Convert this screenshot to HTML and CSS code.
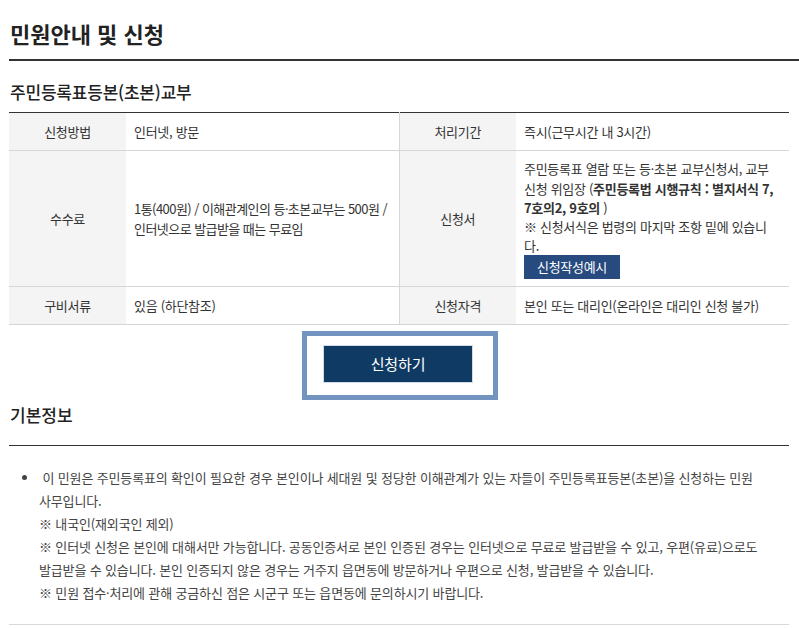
FILE: index.html
```html
<!DOCTYPE html>
<html lang="ko">
<head>
<meta charset="utf-8">
<title>민원안내 및 신청</title>
<link rel="stylesheet" href="styles.css">
</head>
<body>
<div class="page">
  <h1 class="page-title">민원안내 및 신청</h1>
  <h2 class="sub-title">주민등록표등본(초본)교부</h2>
  <table class="info-table">
    <colgroup>
      <col class="c-label"><col class="c-value"><col class="c-label"><col class="c-value">
    </colgroup>
    <tr>
      <th>신청방법</th>
      <td>인터넷, 방문</td>
      <th class="th-split">처리기간</th>
      <td>즉시(근무시간 내 3시간)</td>
    </tr>
    <tr>
      <th>수수료</th>
      <td class="td-fee">1통(400원) / 이해관계인의 등<span class="dot">·</span>초본교부는 500원 / 인터넷으로 발급받을 때는 무료임</td>
      <th class="th-split">신청서</th>
      <td class="td-form">주민등록표 열람 또는 등<span class="dot">·</span>초본 교부신청서, 교부 신청 위임장 (<b>주민등록법 시행규칙 : 별지서식 7, 7호의2, 9호의</b> )<br>※ 신청서식은 법령의 마지막 조항 밑에 있습니다.<br><a class="btn-sample" href="#">신청작성예시</a></td>
    </tr>
    <tr>
      <th>구비서류</th>
      <td>있음 (하단참조)</td>
      <th class="th-split">신청자격</th>
      <td>본인 또는 대리인(온라인은 대리인 신청 불가)</td>
    </tr>
  </table>
  <div class="apply-wrap">
    <div class="apply-frame"><a class="btn-apply" href="#">신청하기</a></div>
  </div>
  <h3 class="section-title">기본정보</h3>
  <ul class="basic-list">
    <li>&nbsp;이 민원은 주민등록표의 확인이 필요한 경우 본인이나 세대원 및 정당한 이해관계가 있는 자들이 주민등록표등본(초본)을 신청하는 민원 사무입니다.<br>※ 내국인(재외국인 제외)<br>※ 인터넷 신청은 본인에 대해서만 가능합니다. 공동인증서로 본인 인증된 경우는 인터넷으로 무료로 발급받을 수 있고, 우편(유료)으로도 발급받을 수 있습니다. 본인 인증되지 않은 경우는 거주지 읍면동에 방문하거나 우편으로 신청, 발급받을 수 있습니다.<br>※ 민원 접수<span class="dot">·</span>처리에 관해 궁금하신 점은 시군구 또는 읍면동에 문의하시기 바랍니다.</li>
  </ul>
</div>
</body>
</html>
```

FILE: styles.css
```css
html, body {
  margin: 0;
  padding: 0;
  background: #fff;
}
body {
  font-family: "Noto Sans CJK KR", "Noto Sans", sans-serif;
  color: #333;
  font-size: 13px;
  letter-spacing: -0.15px;
}
.dot {
  font-family: "Noto Sans", "Noto Sans CJK KR", sans-serif;
}
.page {
  width: 780px;
  padding: 18px 0 0 9px;
}
.page-title {
  margin: 0 -10px 0 0;
  padding: 0 0 11px 1px;
  font-size: 22px;
  line-height: 30px;
  font-weight: 700;
  letter-spacing: 0;
  color: #222;
  border-bottom: 2px solid #333;
}
.sub-title {
  margin: 19px 0 8px;
  padding-left: 1px;
  font-size: 17px;
  line-height: 24px;
  font-weight: 500;
  letter-spacing: -0.2px;
  color: #222;
}
.info-table {
  width: 780px;
  border-collapse: collapse;
  table-layout: fixed;
  border-top: 1px solid #333;
  border-bottom: 1px solid #333;
}
.c-label { width: 117px; }
.c-value { width: 273px; }
.info-table th,
.info-table td {
  padding: 9px 8px;
  line-height: 19px;
  font-size: 13px;
  letter-spacing: -0.3px;
  border-bottom: 1px solid #d6d6d6;
  vertical-align: middle;
}
.info-table th {
  background: #f4f4f4;
  font-weight: 400;
  color: #333;
  text-align: center;
}
.info-table td {
  text-align: left;
  color: #333;
  padding-right: 5px;
}
.info-table .td-fee {
  letter-spacing: -0.55px;
  padding-right: 2px;
}
.info-table .th-split {
  border-left: 1px solid #d6d6d6;
}
.info-table .td-form {
  padding: 8px 8px 7px;
}
.btn-sample {
  display: inline-block;
  height: 24px;
  line-height: 24px;
  padding: 0 13px;
  background: #274b7f;
  color: #fff;
  text-decoration: none;
  font-size: 13px;
}
.apply-wrap {
  display: flex;
  justify-content: center;
  margin-top: 6px;
  padding-left: 2px;
}
.apply-frame {
  border: 5px solid #7393c0;
  padding: 9px 20px 12px 16px;
}
.btn-apply {
  display: block;
  width: 148px;
  height: 36px;
  line-height: 36px;
  text-align: center;
  background: #0f3a63;
  border: 1px solid #d3dbe5;
  color: #fff;
  font-size: 15px;
  text-decoration: none;
}
.section-title {
  margin: 3px 0 0;
  padding: 0 0 18px 1px;
  font-size: 17px;
  line-height: 24px;
  font-weight: 500;
  letter-spacing: 0;
  color: #222;
  border-bottom: 1px solid #333;
}
.basic-list {
  margin: 0;
  padding: 20px 0 19px 30px;
  border-bottom: 1px solid #d9d9d9;
  list-style: disc;
}
.basic-list li {
  font-size: 13px;
  line-height: 23px;
  color: #444;
  word-break: keep-all;
}
```
